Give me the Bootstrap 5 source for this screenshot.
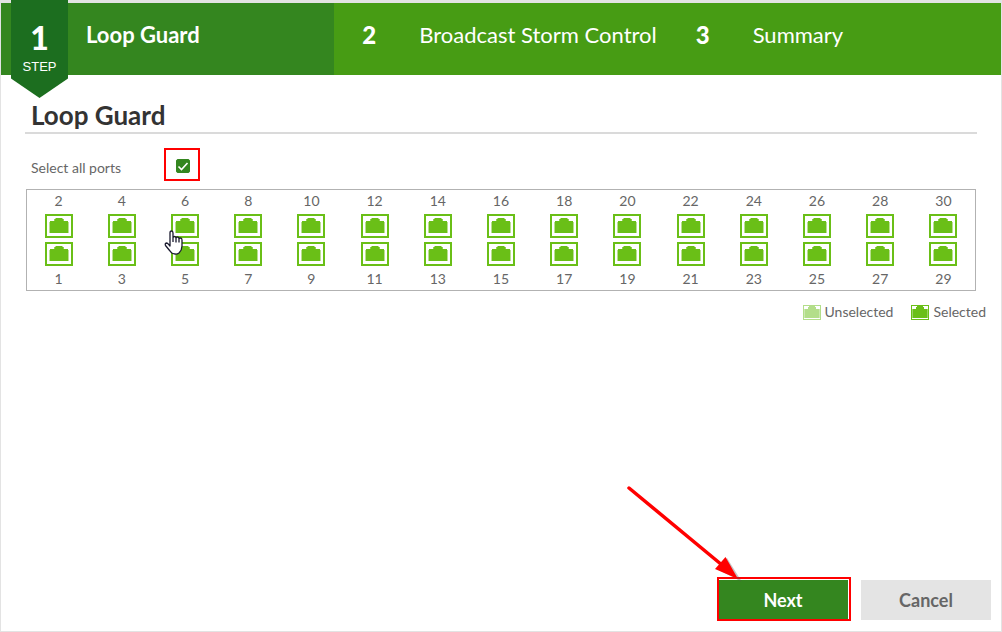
<!DOCTYPE html>
<html lang="en">
<head>
<meta charset="utf-8">
<meta name="viewport" content="width=device-width, initial-scale=1">
<title>Loop Guard</title>
<link href="https://cdn.jsdelivr.net/npm/bootstrap@5.3.0/dist/css/bootstrap.min.css" rel="stylesheet">
<style>
  body { font-family: Lato, "Open Sans", sans-serif; font-size: 14px; line-height: 20px; color: #666; }
  .wizard { border: 1px solid #e3e3e3; border-top-width: 3px; }
  .steps { background: #479c14; height: 72px; color: #fff; font-size: 22px; line-height: 32px; }
  .step-item { padding: 16px 0 0 28px; }
  .step-item.current { background: #34861f; padding-left: 85px; font-weight: 700; }
  .step-no { width: 57px; font-size: 24px; font-weight: 900; }
  .ribbon { top: -3px; left: 10px; width: 57px; height: 98px; padding-top: 21px; background: #1c6e1f;
            clip-path: polygon(0 0, 100% 0, 100% 80%, 50% 100%, 0 80%); }
  .ribbon-no { font-size: 32px; font-weight: 900; line-height: 34px; }
  .ribbon-label { font: 400 13px/24px "Liberation Sans", sans-serif; }
  .page-body { padding: 24px 24px 0; }
  .page-title { font-size: 26px; line-height: 32px; font-weight: 700; color: #333; padding: 0 0 1px 6px; border-bottom: 2px solid #dadada; }
  .select-all { padding-left: 6px; margin-top: 14px; }
  .select-all label { width: 133px; padding-top: 6px; }
  .callout-box { border: 2px solid #f00; }
  .check-frame { width: 36px; height: 33px; }
  .check-frame .form-check-input { width: 14px; height: 14px; border-radius: 2px; margin: 2px 0 0 2px; }
  .check-frame .form-check-input:checked { background-color: #34861f; border-color: #34861f; background-origin: border-box;
    background-image: url("data:image/svg+xml,%3csvg xmlns='http://www.w3.org/2000/svg' viewBox='0 0 14 14'%3e%3cpath d='M2.500 7.500l3 3 6-6.500' fill='none' stroke='%23fff' stroke-width='1.600'/%3e%3c/svg%3e"); }
  .ports { display: grid; grid-template-columns: repeat(15, 1fr); border: 1px solid #b2b2b2; margin: 8px 1px 0; padding: 1px 0; }
  .port { width: 28px; height: 24px; padding: 2px 0 3px; border: 2px solid #6abf17; background: #fff; }
  .port-gap { gap: 4px; padding: 3px 0; }
  .legend { gap: 18px; margin: 11px -9px 0 0; }
  .actions { padding: 0 10px 11px; gap: 13px; }
  .action-btn { width: 130px; height: 40px; font-size: 18px; line-height: 24px; font-weight: 700; padding: 0; border: 0; border-radius: 0; }
  .next-btn, .next-btn:hover { background: #34861f; color: #fff; }
  .cancel-btn, .cancel-btn:hover { background: #e4e4e4; color: #666; }
  .next-frame { inset: -3px -3px -1px -1px; pointer-events: none; }
  .next-arrow { right: 106px; bottom: 37px; pointer-events: none; }
  .hand { left: 11px; top: 39px; pointer-events: none; }
</style>
</head>
<body>
<svg class="d-none" aria-hidden="true">
  <symbol id="jack" viewBox="0 0 20 15">
    <path d="M0 4h1V3h4V1h1V0h8v1h1v2h4v1h1v11H0z" fill="#b9e08f"/>
    <path d="M1 4V3h4.500V1H7V0h6v1h1.500v2H19v12H1z" fill="#6abf17"/>
  </symbol>
  <symbol id="jack-legend" viewBox="0 0 18 15">
    <path d="M0 0h18v15H0z" fill="#6abf17"/>
    <path d="M1 1h16v13H1z" fill="#fff"/>
    <path d="M2 13V4h3V2h1V1h6v1h1v2h3v9z" fill="#6abf17"/>
    <path d="M1 4h1v9H1zM16 4h1v9h-1z" fill="#9bd463"/>
  </symbol>
</svg>
<main class="wizard d-flex flex-column min-vh-100 bg-white">
  <header class="steps position-relative">
    <ol class="row g-0 h-100 list-unstyled mb-0">
      <li class="col-4 step-item current" aria-current="step">Loop Guard</li>
      <li class="col-4 step-item d-flex"><span class="step-no">2</span><span>Broadcast Storm Control</span></li>
      <li class="col-4 step-item d-flex"><span class="step-no">3</span><span>Summary</span></li>
    </ol>
    <div class="ribbon position-absolute text-center">
      <div class="ribbon-no">1</div>
      <div class="ribbon-label">STEP</div>
    </div>
  </header>

  <section class="page-body flex-grow-1">
    <h1 class="page-title mb-0">Loop Guard</h1>
    <div class="select-all d-flex align-items-center">
      <label for="allPorts">Select all ports</label>
      <span class="check-frame callout-box d-flex align-items-center justify-content-center">
        <input class="form-check-input" type="checkbox" id="allPorts" checked>
      </span>
    </div>
    <div class="ports" id="ports"></div>
    <div class="legend d-flex justify-content-end">
      <span class="d-flex align-items-center gap-1"><svg width="18" height="15" opacity=".5"><use href="#jack-legend"/></svg>Unselected</span>
      <span class="d-flex align-items-center gap-1"><svg width="18" height="15"><use href="#jack-legend"/></svg>Selected</span>
    </div>
  </section>

  <footer class="actions d-flex justify-content-end">
    <div class="position-relative">
      <button type="button" class="btn action-btn next-btn">Next</button>
      <span class="next-frame callout-box position-absolute"></span>
      <svg class="next-arrow position-absolute" width="116" height="98" viewBox="0 0 116 98" aria-hidden="true">
        <path d="M116 97 91 84 101 73z" fill="#555" opacity=".35"/>
        <path d="M3 3 96 80" stroke="#f00" stroke-width="3.500" stroke-linecap="round"/>
        <path d="M112 94 89 84 99.500 72z" fill="#f00"/>
      </svg>
    </div>
    <button type="button" class="btn action-btn cancel-btn">Cancel</button>
  </footer>
</main>
<script src="https://cdn.jsdelivr.net/npm/bootstrap@5.3.0/dist/js/bootstrap.bundle.min.js"></script>
<script>
  const hand = '<svg class="hand position-absolute" width="20" height="26" viewBox="0 0 20 26" aria-hidden="true"><path d="M6 16V3Q6 1 7.500 1T9 3V8Q9 6.500 10.500 6.500T12 8.500Q12 7 13.500 7T15 9Q15 8 16.500 8T18 10V16Q18 20 15 23Q13 24.500 11 24Q8 24 6 21L1.500 15.500Q.5 13 3 13Q4.500 14 6 16ZM9 8v4M12 8.500v4M15 9v3.500" fill="#fff" stroke="#1a1a2e" stroke-width="1.300" stroke-linejoin="round"/></svg>';
  const port = n => `<button type="button" class="port d-flex justify-content-center" aria-label="Port ${n}" aria-pressed="true"><svg width="20" height="15"><use href="#jack"/></svg></button>`;
  document.getElementById('ports').innerHTML = Array.from({ length: 15 }, (_, i) => {
    const n = 2 * (i + 1);
    return `<div class="position-relative text-center">
      <div>${n}</div>
      <div class="port-gap d-flex flex-column align-items-center">${port(n)}${port(n - 1)}</div>
      <div>${n - 1}</div>${n === 6 ? hand : ''}
    </div>`;
  }).join('');
  document.querySelectorAll('.port').forEach(b => b.addEventListener('click', () =>
    b.setAttribute('aria-pressed', b.getAttribute('aria-pressed') !== 'true')));
</script>
</body>
</html>
